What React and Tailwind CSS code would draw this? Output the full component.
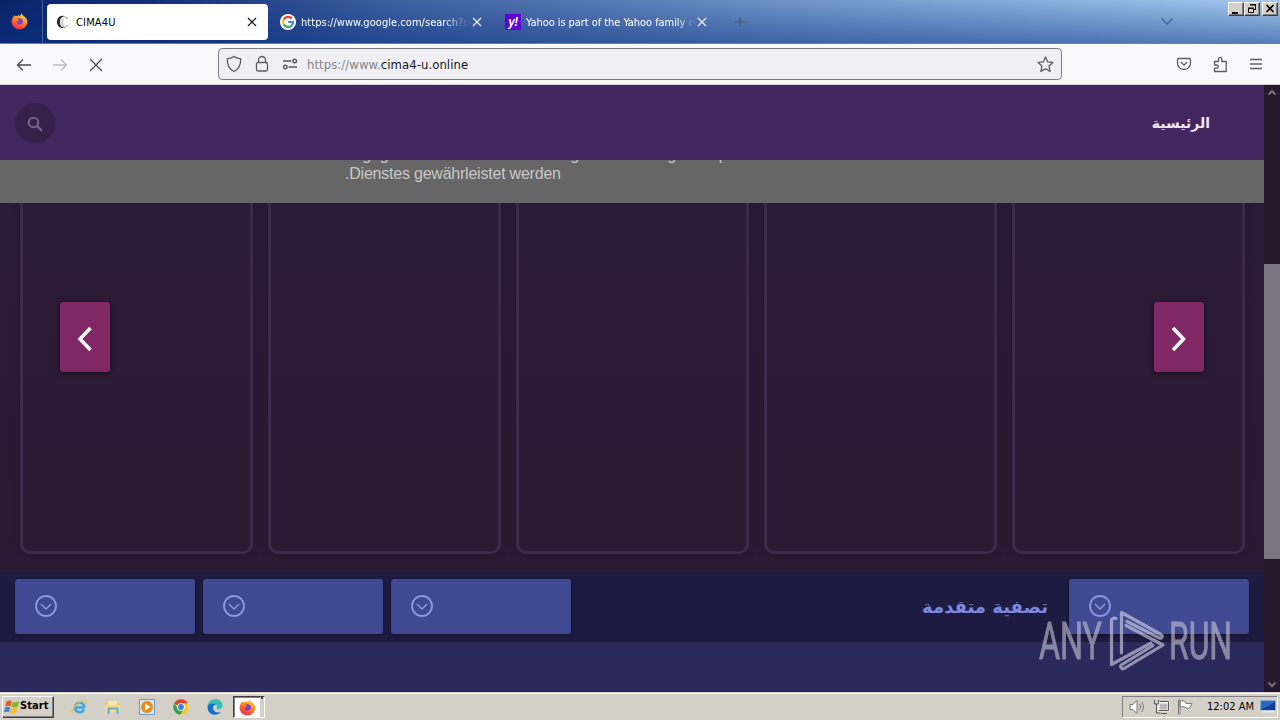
import React from "react";

const tahoma = "font-['DejaVu_Sans_Condensed','DejaVu_Sans',sans-serif] [font-stretch:condensed]";

function Firefox({ size }) {
  return (
    <svg width={size} height={size} viewBox="0 0 16 16">
      <defs>
        <linearGradient id="fxBody" x1="0.8" y1="0" x2="0.3" y2="1">
          <stop offset="0" stopColor="#ffe14a" />
          <stop offset="0.45" stopColor="#ff8a1c" />
          <stop offset="1" stopColor="#ee2456" />
        </linearGradient>
      </defs>
      <path d="M10.2.3c.2 1.6 1.4 2.2 2.3 3 .9.4 1.5 1.2 1.700 1.800.4 0 .7.5.9 1 1.200 4.600-2 9.300-7 9.300C3.900 15.400.6 12.200.6 8.200c0-2 .8-3.700 1.800-4.800 0-.6.1-1 .5-1.600.2.500.5.9.9 1.200.7-.3 1.500-.3 2.200-.1.500-.7 1.100-1 1.900-1.200-.2.500-.3.900-.1 1.300C8.800 2.800 9.300 1.300 10.200.3z" fill="url(#fxBody)" />
      <path d="M6 5.300c1-.5 2-.3 2.700-.2 1.700.2 2.700 1.400 2.600 3-.1 1.800-1.400 2.800-3 2.800-1.800 0-3-1.300-3-3 1-.1 1.700-.3 2.200-1.100-.6-.2-1.100-.6-1.500-1.500z" fill="#7a3fd6" />
    </svg>
  );
}

function GoogleIcon() {
  return (
    <svg width="16" height="16" viewBox="0 0 16 16">
      <circle cx="8" cy="8" r="8" fill="#fff" />
      <g fill="none" strokeWidth="2.200">
        <path d="M11.800 4.600A5 5 0 0 0 3.700 5.500" stroke="#ea4335" />
        <path d="M3.700 5.500a5 5 0 0 0 0 5" stroke="#fbbc05" />
        <path d="M3.700 10.500a5 5 0 0 0 7.700 1.200" stroke="#34a853" />
        <path d="M11.400 11.700A5 5 0 0 0 13 8H8.200" stroke="#4285f4" />
      </g>
    </svg>
  );
}

function Close({ color }) {
  return (
    <svg width="10" height="10" viewBox="0 0 10 10" stroke={color} strokeWidth="1.200">
      <path d="M1 1l8 8M9 1L1 9" />
    </svg>
  );
}

function TitleBar() {
  return (
    <div className="relative h-[44px] border-b border-[#707d98] bg-[linear-gradient(to_bottom,rgba(10,50,130,0),rgba(10,50,130,.5)),linear-gradient(to_right,#0a246a_0%,#12307a_12%,#3f60a0_31%,#5577b2_45%,#7395ca_62%,#8cb0df_82%,#a6caf0_100%)] flex">
      <div className="w-[43px] shrink-0 border-r border-[#4a5e9c] flex items-center pl-[11px]">
        <Firefox size={17} />
      </div>
      <div className="ml-1 mt-1 w-[221px] h-9 shrink-0 rounded bg-white flex items-center pl-2 pr-[11px]">
        <svg width="16" height="16" viewBox="0 0 16 16" fill="none">
          <path d="M9.500 2.200C5 .8 2 4 2 8s3 7 7.500 5.600C5.500 13 5 10.500 5 8s.8-5 4.500-5.800z" fill="#2a2a2a" />
          <path d="M8 2.500c2 0 3 .8 4 2.500V2.500M8.500 4.500c-2 2-2 6 .5 8.500M9 13.500c1.500 0 3-.8 3.500-2.500" stroke="#999" strokeWidth="1" />
        </svg>
        <span className={`${tahoma} ml-[5px] pt-[3px] grow text-[11px] tracking-[.15px] text-black`}>CIMA4U</span>
        <Close color="#15141a" />
      </div>
      <div className="ml-3 flex items-center w-[202px] shrink-0">
        <GoogleIcon />
        <span className={`${tahoma} ml-[5px] w-[168px] overflow-hidden whitespace-nowrap pt-[3px] text-[11px] tracking-[.04px] text-white [mask-image:linear-gradient(to_right,#000_85%,transparent)]`}>https://www.google.com/search?q</span>
        <span className="ml-[3px]"><Close color="#e8eefc" /></span>
      </div>
      <div className="ml-[23px] flex items-center shrink-0">
        <span className="flex size-4 items-center justify-center bg-[#5f01d1] text-[12px] font-bold italic leading-none text-white font-['Liberation_Sans',sans-serif] tracking-tighter">y!</span>
        <span className={`${tahoma} ml-[5px] w-[168px] overflow-hidden whitespace-nowrap pt-[3px] text-[11px] tracking-[-.06px] text-white [mask-image:linear-gradient(to_right,#000_90%,transparent)]`}>Yahoo is part of the Yahoo family o</span>
        <span className="ml-[3px]"><Close color="#e8eefc" /></span>
        <svg className="ml-[28px]" width="10" height="10" stroke="#48557a" strokeWidth="1.200"><path d="M5 0v10M0 5h10" /></svg>
      </div>
      <svg className="ml-auto mr-[107px] mt-[17px]" width="12" height="9" fill="none" stroke="#46638f" strokeWidth="1.300"><path d="M.5 1.500L6 7l5.500-5.500" /></svg>
      <div className="absolute right-0.5 top-0.5 flex">
        <WinButton><path d="M3 10h6v2H3z" fill="#000" /></WinButton>
        <WinButton><path d="M5.500 3v-.5h5v5H9M5 3h6M3.500 6.500h5v4h-5zM3 6h6" fill="none" stroke="#000" /></WinButton>
        <span className="w-0.5" />
        <WinButton><path d="M3.500 3l7 7M10.500 3l-7 7" stroke="#000" strokeWidth="1.700" /></WinButton>
      </div>
    </div>
  );
}

function WinButton({ children }) {
  return (
    <span className="h-[14px] w-4 border border-t-white border-l-white border-b-[#404040] border-r-[#404040] bg-[#d4d0c8] shadow-[inset_-1px_-1px_0_#808080]">
      <svg className="-mt-px" width="14" height="14">{children}</svg>
    </span>
  );
}

function Toolbar() {
  return (
    <div className="flex h-[41px] items-center border-b border-[#cfcdd6] bg-[#f9f9fb] text-[#5b5b66]">
      <div className="flex w-[218px] shrink-0 items-center pl-4 pt-px">
        <svg width="16" height="16" fill="none" stroke="#4a4a55" strokeWidth="1.300"><path d="M15 8H1.500M7 2.500L1.500 8 7 13.500" /></svg>
        <svg className="ml-5" width="16" height="16" fill="none" stroke="#b9b9c0" strokeWidth="1.300"><path d="M1 8h13.500M9 2.500L14.500 8 9 13.500" /></svg>
        <svg className="ml-5" width="16" height="16" fill="none" stroke="#4a4a55" strokeWidth="1.300"><path d="M2 2l12 12M14 2L2 14" /></svg>
      </div>
      <div className="flex h-8 w-[844px] shrink-0 items-center rounded border border-[#7d7d86] bg-[#f0f0f4] pl-[7px] pr-[7px]">
        <svg width="16" height="18" fill="none" stroke="currentColor" strokeWidth="1.300"><path d="M8 1.500c2 1.700 4.300 2 6.700 2.300.2 6-1.500 10.300-6.700 12.700C2.800 14.100 1.100 9.800 1.300 3.800 3.700 3.500 6 3.200 8 1.500z" /></svg>
        <svg className="ml-3" width="16" height="18" fill="none" stroke="currentColor" strokeWidth="1.300"><rect x="2.500" y="7.500" width="11" height="8.500" rx="1.500" /><path d="M4.500 7.500V5a3.500 3.500 0 0 1 7 0v2.500" /></svg>
        <svg className="ml-3" width="16" height="14" fill="none" stroke="currentColor" strokeWidth="1.400"><circle cx="12.700" cy="4" r="1.800" /><circle cx="3.300" cy="10" r="1.800" /><path d="M1 4h8.500M6.500 10H15" /></svg>
        <span className={`${tahoma} ml-[9px] grow pt-0.5 text-[13px] tracking-[.05px] text-[#85858f]`}>https://www.<span className="text-[#15141a]">cima4-u.online</span></span>
        <svg width="17" height="17" viewBox="0 0 17 17" fill="none" stroke="currentColor" strokeWidth="1.300" strokeLinejoin="round"><path d="M8.500 1l2.200 4.800 5.200.6-3.900 3.500 1.100 5.500-4.600-2.700-4.600 2.700L5 9.900 1.100 6.400l5.200-.6z" /></svg>
      </div>
      <div className="ml-auto flex items-center pr-[17px]">
        <svg width="16" height="16" fill="none" stroke="currentColor" strokeWidth="1.300"><path d="M2.700 2.500h10.600c.8 0 1.200.4 1.200 1.200V7a6.500 6.500 0 0 1-13 0V3.700c0-.8.4-1.200 1.200-1.200z" /><path d="M4.800 6L8 9.200 11.200 6" /></svg>
        <svg className="ml-5" width="17" height="17" fill="none" stroke="currentColor" strokeWidth="1.300" strokeLinejoin="round"><path d="M2.500 5.500h4V3a1.600 1.600 0 0 1 3.200 0v2.500h4.500v10H2.500v-3.300h2.200a1.600 1.600 0 0 0 0-3.200H2.500z" /></svg>
        <svg className="ml-[20px]" width="14" height="14" stroke="currentColor" strokeWidth="1.300"><path d="M1 2.500h12M1 7h12M1 11.500h12" /></svg>
      </div>
    </div>
  );
}

function SliderArrow({ d }) {
  return (
    <button className="flex h-[70px] w-[50px] items-center justify-center rounded-[3px] bg-[#7f2865] shadow-[0_1px_4px_#15051e]">
      <svg className="mt-1" width="16" height="26" fill="none" stroke="#fff" strokeWidth="3.500"><path d={d} /></svg>
    </button>
  );
}

function FilterBox() {
  return (
    <div className="flex h-[55px] w-[180px] items-center rounded-[3px] bg-[#404a93] pl-5 pt-px shadow-[0_1px_3px_#14102f]">
      <svg width="23" height="23" fill="none" stroke="#8c96da"><circle cx="11" cy="11" r="10" strokeWidth="1.900" /><path d="M6 9l5 5 5-5" strokeWidth="1.500" /></svg>
    </div>
  );
}

function Page() {
  return (
    <div className="relative flex w-[1264px] flex-col bg-[#2a1b35]">
      <header className="flex h-[75px] shrink-0 items-center justify-between bg-[#41265f] pl-[15px] pr-[54px]">
        <span className="flex size-10 items-center justify-center rounded-full bg-[#37204a]">
          <svg className="mt-0.5" width="16" height="16" fill="none" stroke="#78628a" strokeWidth="2"><circle cx="6.500" cy="6.500" r="4.800" /><path d="M10 10l5 5" strokeWidth="2.400" /></svg>
        </span>
        <span dir="rtl" className="pt-0.5 text-[14px] font-bold text-[#f2e9fb] font-['DejaVu_Sans',sans-serif]">الرئيسية</span>
      </header>
      <div className="flex h-[43px] shrink-0 flex-col justify-end overflow-hidden bg-[#666] pl-[345px] text-[16px] leading-[19px] tracking-[-.22px] text-[#c8c8c8] font-['Liberation_Sans',sans-serif]">
        <p dir="rtl" className="w-[574px] self-start whitespace-nowrap text-left">angegeben werden und die richtige Bearbeitung Ihres personen</p>
        <p dir="rtl" className="mb-5 self-start whitespace-nowrap">Dienstes gewährleistet werden.</p>
      </div>
      <section className="h-[369px] shrink-0 overflow-hidden bg-linear-to-b from-[#2a1b38] to-[#2a1a33] px-5">
        <div className="flex h-[351px] gap-[15px]">
          {[0, 1, 2, 3, 4].map((card) => (
            <div key={card} className="w-[233px] shrink-0 rounded-b-[10px] border-[3px] border-t-0 border-[#3b2a49] shadow-[0_0_8px_rgba(20,5,30,.3)]" />
          ))}
        </div>
      </section>
      <div className="flex h-[70px] shrink-0 items-center justify-between bg-[#1e1b40] px-[15px] pb-0.5">
        <div className="flex gap-2">
          <FilterBox />
          <FilterBox />
          <FilterBox />
        </div>
        <div className="flex items-center gap-[21px]">
          <span dir="rtl" className="text-[18px] font-bold text-[#7c88e0] font-['DejaVu_Sans',sans-serif]">تصفية متقدمة</span>
          <FilterBox />
        </div>
      </div>
      <div className="grow border-t-4 border-[#2c2b58] bg-[#2a295b]" />
      <div className="absolute left-[60px] top-[217px]"><SliderArrow d="M13.500 2L3 13l10.500 11" /></div>
      <div className="absolute right-[60px] top-[217px]"><SliderArrow d="M2 2l10.500 11L2 24" /></div>
    </div>
  );
}

function Watermark() {
  return (
    <svg className="absolute left-[1036px] top-[608px] opacity-60" width="200" height="68" fill="none">
      <g fill="#c9c6d6" stroke="#c9c6d6" strokeWidth=".9" fontFamily="Roboto, sans-serif" fontSize="52">
        <text x="3" y="51" textLength="63" lengthAdjust="spacingAndGlyphs">ANY</text>
        <text x="133" y="51" textLength="63" lengthAdjust="spacingAndGlyphs">RUN</text>
      </g>
      <g stroke="#dcd9ea" strokeWidth="3.200" strokeLinejoin="round" strokeLinecap="round">
        <path d="M80 10.500c-3-1-4.500.5-4.500 2.500v43.500L115 35" />
        <path d="M85.500 45V4.500L125 26.500c2.500 2 .5 4.500-2 3.300L91 13.500" />
        <path d="M90 17.500L127 37 88 60.500c-3 1.200-4.500-2.200-2-4l31-19" />
      </g>
    </svg>
  );
}

function Scrollbar() {
  return (
    <div className="flex w-4 flex-col items-center bg-[#25172c]">
      <svg className="mt-[3px]" width="10" height="9" fill="none" stroke="#77707d" strokeWidth="2"><path d="M1.500 6.500L5 3l3.500 3.500" /></svg>
      <div className="mt-[167px] h-[295px] w-4 bg-[#7b7581]" />
      <svg className="mb-[3px] mt-auto" width="10" height="9" fill="none" stroke="#77707d" strokeWidth="2"><path d="M1.500 2.500L5 6l3.500-3.500" /></svg>
    </div>
  );
}

function Taskbar() {
  return (
    <div className={`${tahoma} flex h-[28px] items-center border-t border-[#d4d0c8] bg-[#d4d0c8] pl-0.5 text-[11px] text-black shadow-[inset_0_1px_0_#fff]`}>
      <div className="flex h-[22px] w-[52px] shrink-0 items-center border border-t-white border-l-white border-b-[#404040] border-r-[#404040] pl-px shadow-[inset_-1px_-1px_0_#808080]">
        <svg width="16" height="16" viewBox="0 0 16 16">
          <path d="M2.500 2.500c2-1.400 3.700-1.200 5.300-.3L6.600 7.300C5 6.500 3.300 6.500 1.300 7.600z" fill="#e8581c" />
          <path d="M8.800 2.800c2 .8 4 .8 6.400-.5l-1.400 5c-2 1.200-4 1.200-6.200.3z" fill="#7dba27" />
          <path d="M1 8.600c2-1.200 3.700-1.100 5.300-.3l-1.300 5c-1.600-.8-3.300-.8-5 .2z" fill="#3f86d8" />
          <path d="M7.300 8.700c2 .8 4 .8 6.300-.4l-1.400 5c-2 1.300-4 1.200-6.200.3z" fill="#f6bd22" />
        </svg>
        <span className="text-[11px] font-bold tracking-[.1px]">Start</span>
      </div>
      <div className="flex items-center gap-[18px] pl-[17px]">
        <svg width="16" height="16" viewBox="0 0 16 16" fill="none">
          <path d="M13.500 8.500H4.600M13 10.500c-2 4.200-9 3.300-9-2.200 0-6.200 9.400-6 9.500 0" stroke="#3ba4e4" strokeWidth="2.500" />
          <path d="M2 14.500C-1.500 13 7 .5 14.500 2c1 .3.6 2 0 3" stroke="#e6c440" strokeWidth="1.300" />
        </svg>
        <svg width="16" height="16" viewBox="0 0 16 16">
          <path d="M1 3h5l1 1.500h7V13H1z" fill="#e9c95e" />
          <path d="M3 2h9v5H3z" fill="#f9e9a4" />
          <path d="M0 6h15v7H0z" fill="#f6dd81" />
          <path d="M3.500 15V9.500h9V15" fill="none" stroke="#62acd8" strokeWidth="2" />
        </svg>
        <svg width="16" height="16" viewBox="0 0 16 16">
          <path d="M.5.500h15v15H.5z" fill="#d6e7f2" stroke="#659dce" />
          <circle cx="8" cy="8" r="6" fill="#ee8b18" />
          <path d="M6 4.500v7L11.500 8z" fill="#fff" />
        </svg>
        <svg width="16" height="16" viewBox="0 0 16 16">
          <circle cx="8" cy="8" r="7.700" fill="#f7c929" />
          <path d="M1.300 4.200A7.700 7.700 0 0 1 14.800 4.300H8a3.700 3.700 0 0 0-3.500 2.500z" fill="#de4435" />
          <path d="M1.300 4.200A7.700 7.700 0 0 0 7.300 15.700L10.800 10A3.700 3.700 0 0 1 4.800 9.800z" fill="#2fa252" />
          <circle cx="8" cy="8" r="3.800" fill="#fff" />
          <circle cx="8" cy="8" r="2.900" fill="#397ee9" />
        </svg>
        <svg width="16" height="16" viewBox="0 0 16 16">
          <path d="M.5 8C.5 3.600 3.800.3 8.300.3c4.200 0 7.300 2.700 7.300 6.300 0 2.500-2 3.800-4 3.800-1.400 0-2.300-.5-2.100-1 .3-.5.600-.9.600-1.500C10 5.700 8 4.500 5.700 4.600 3 4.700.9 6.200.5 8z" fill="#35bdb8" />
          <path d="M.5 8C1 5.500 3.500 4.500 5.700 4.600c1.500 0 3 .7 3.700 1.600-2-.5-3.300 1-3.300 2.800 0 2.500 2.700 4.800 5.500 4.400 1-.1 2-.5 2.600-.8C13 14.600 10.700 15.800 8 15.800 3.700 15.800.3 12.500.5 8z" fill="#176fc7" />
        </svg>
      </div>
      <div className="ml-2.5 flex h-[22px] w-[32px] border border-t-[#404040] border-l-[#404040] border-b-white border-r-white">
        <div className="flex w-[26px] items-center justify-center border-l border-t border-[#808080] bg-white">
          <Firefox size={17} />
        </div>
        <span className="ml-px h-0.5 w-0.5 bg-[#404040]" />
      </div>
      <div className="ml-auto mr-0.5 flex h-[22px] w-[156px] items-center border border-t-[#808080] border-l-[#808080] border-b-white border-r-white pl-1.5">
        <svg width="17" height="16" fill="#fff" stroke="#777"><path d="M1 5.500h3l4-4v13l-4-4H1z" /><path d="M10.500 5c1.300 1.500 1.300 4.500 0 6M12.500 3c2.500 3 2.500 7 0 10" fill="none" /></svg>
        <svg className="ml-[7px]" width="17" height="16" fill="none" stroke="#555"><path d="M5.500 3.500h10v8h-10z" fill="#b8b8b8" stroke="#fff" strokeWidth="2" /><path d="M6.500 2.500h9v9h-10M8 14.500h6M1.500 1v4h4V1M3.500 5v9h4" /></svg>
        <svg className="ml-[7px]" width="17" height="16" fill="#fff" stroke="#777"><path d="M1.500 1v14h1.500V1zM3 2.500c2.500-1.500 4-.5 5.500.5l.5 1.500h6l-2.500 4.500c-2 .8-3.500.5-4.500-1-1.500-.8-3-.5-5 .5z" /></svg>
        <span className="ml-[13px] whitespace-nowrap pt-px text-[11px]">12:02 AM</span>
        <svg className="ml-[6px]" width="16" height="14"><path d="M.5.500h15v10H.5z" fill="#246ac2" stroke="#8cabcd" /><path d="M1 10l14-8v8z" fill="#123f94" /><path d="M1 11.500h14" stroke="#dfe9f5" strokeWidth="2" /></svg>
      </div>
    </div>
  );
}

export default function App() {
  return (
    <div className="relative flex h-[720px] w-[1280px] flex-col overflow-hidden">
      <TitleBar />
      <Toolbar />
      <main className="flex h-[607px] shrink-0">
        <Page />
        <Scrollbar />
      </main>
      <Taskbar />
      <Watermark />
    </div>
  );
}
